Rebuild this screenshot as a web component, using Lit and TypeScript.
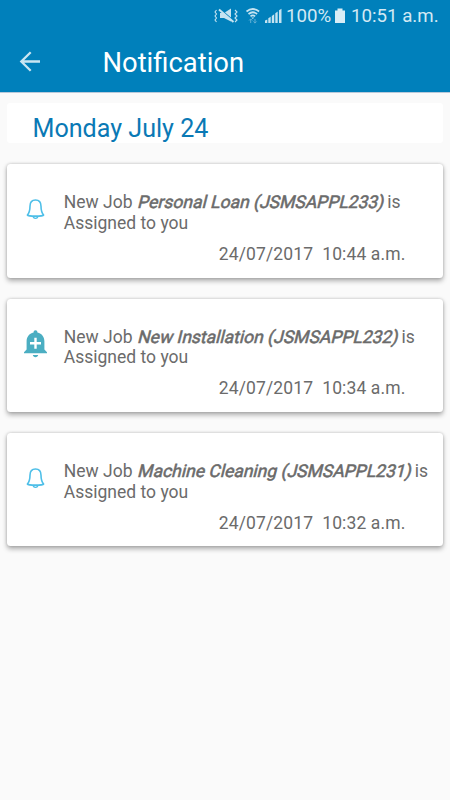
import { LitElement, html, css, svg } from "lit";
import { customElement, property } from "lit/decorators.js";

interface Notice {
  job: string;
  time: string;
  isNew: boolean;
}

const notices: Notice[] = [
  { job: "Personal Loan (JSMSAPPL233)", time: "24/07/2017  10:44 a.m.", isNew: false },
  { job: "New Installation (JSMSAPPL232)", time: "24/07/2017  10:34 a.m.", isNew: true },
  { job: "Machine Cleaning (JSMSAPPL231)", time: "24/07/2017  10:32 a.m.", isNew: false },
];

const outlineBell = svg`
  <path d="M4.400 20C6.500 17.600 7 14.800 7 11.300C7 7.300 9.100 5 12.500 5C15.900 5 18 7.300 18 11.300C18 14.800 18.500 17.600 20.600 20C20.100 20.900 17.500 21.100 12.500 21.100C7.500 21.100 4.900 20.900 4.400 20Z"
    fill="none" stroke="#4ebfe8" stroke-width="1.600" stroke-linejoin="round"/>
  <path d="M10.100 21c.2 3.200 4.600 3.200 4.800 0" fill="none" stroke="#4ebfe8" stroke-width="1.400"/>`;

const addBell = svg`
  <path d="M12.500 0.200c1.200 0 1.900.8 1.900 1.900v.5c4.600 1 7 4.500 7 8.800v8.100l2.600 2.800v1H1v-1l2.600-2.800v-8.100c0-4.300 2.400-7.800 7-8.800v-.5c0-1.100.7-1.900 1.900-1.900zM9.800 25.100h5.400c-.3 1.400-1.300 2.100-2.700 2.100s-2.400-.7-2.700-2.100z" fill="#4baec2"/>
  <path d="M12.500 7.800v11M7 13.300h11" stroke="#fff" stroke-width="2.400"/>`;

@customElement("status-bar")
class StatusBar extends LitElement {
  static styles = css`
    :host {
      display: flex;
      height: 31px;
      color: #d3e9f4;
      font: 18.700px/31px Roboto, sans-serif;
      white-space: nowrap;
    }
    svg { display: block; flex: none; }
    .signals { margin-left: 214px; width: 72px; height: 31px; overflow: visible; }
    .percent { width: 49px; }
    .battery { width: 10px; height: 31px; }
    .clock { margin-left: 6px; }
    .percent, .clock { padding-top: 1px; }
  `;
  render() {
    return html`
      <svg class="signals" viewBox="0 0 72 31" fill="none" stroke="#c5e3f1">
        <path d="M6 13h4l7-4.500v13l-7-3.500H6z" fill="#c5e3f1" stroke="none"/>
        <path d="M6 9l14 12" stroke="#0080bb" stroke-width="1.300"/>
        <path d="M5 9.500l14.500 12.500" stroke-width="2"/>
        <path d="M2.500 10l-1.500 2 1.500 2-1.500 2 1.500 2-1.500 2 1.500 2M21 10l2 2-2 2 2 2-2 2 2 2-2 2" stroke-width="1.100"/>
        <path d="M32.500 11.500q6.300-5 12.600 0M34.500 14q4.300-3.500 8.600 0M36.500 16.300q2.300-1.800 4.600 0" stroke-width="1.700"/>
        <path d="M37.300 17.500h3l-1.500 1.500z" fill="#c5e3f1" stroke="none"/>
        <path d="M36.700 23v-4M35.100 20.500l1.600-1.600 1.600 1.600M41 19v4M39.400 21.500l1.600 1.600 1.600-1.600" stroke="#62b0d6" stroke-width="1"/>
        <path d="M51 23v-2.500l2.300-1v3.500zM54.300 23v-4.800l2.400-1.400V23zM57.800 23v-7l2.400-1.800V23zM61.300 23v-9.800l2.400-1.800V23zM65 23V10.300l2.500-1.600V23z" fill="#c5e3f1" stroke="none"/>
      </svg>
      <span class="percent">100%</span>
      <svg class="battery" viewBox="0 0 10 31"><path d="M2.500 8.500h5v2H10V23H0V10.500h2.500z" fill="#d9edf6"/></svg>
      <span class="clock">10:51 a.m.</span>
    `;
  }
}

@customElement("notice-card")
class NoticeCard extends LitElement {
  @property({ attribute: false }) notice!: Notice;

  static styles = css`
    :host {
      display: flex;
      box-sizing: border-box;
      height: 113.400px;
      border-radius: 3.500px;
      background: #fff;
      box-shadow: 0 2.500px 5px rgba(0, 0, 0, 0.3), 0 0 3px rgba(0, 0, 0, 0.17);
      padding: 28px 0 0 16px;
      color: #6b6b6b;
      font: 17.500px/20.600px Roboto, sans-serif;
    }
    .icon { flex: none; width: 24px; height: 28px; margin-top: 3px; }
    .body { margin-left: 16.800px; width: 372px; }
    .message { white-space: nowrap; }
    .job {
      display: inline-block;
      transform: skewX(-14deg);
      transform-origin: 0 80%;
      -webkit-text-stroke: 0.550px currentColor;
    }
    .time {
      margin-top: 10.500px;
      margin-left: 155px;
      white-space: pre;
      letter-spacing: 0.130px;
    }
  `;
  render() {
    return html`
      <svg class="icon" viewBox="0 0 24 28">${this.notice.isNew ? addBell : outlineBell}</svg>
      <div class="body">
        <div class="message">New Job <span class="job">${this.notice.job}</span> is<br />Assigned to you</div>
        <div class="time">${this.notice.time}</div>
      </div>
    `;
  }
}

@customElement("app-root")
class AppRoot extends LitElement {
  static styles = css`
    :host {
      display: block;
      height: 800px;
      overflow: hidden;
      background: #fafafa;
      font-family: Roboto, sans-serif;
    }
    header { height: 92px; background: #0080bb; border-bottom: 1px solid #b9c9da; box-sizing: content-box; }
    .toolbar { display: flex; align-items: center; height: 61px; color: #fff; }
    .back { width: 22px; height: 22px; margin-left: 19px; }
    h1 { margin: 2px 0 0 61.500px; font-size: 27.400px; font-weight: 400; line-height: 34px; }
    h2 {
      margin: 10px 7px 0;
      padding-left: 25.500px;
      height: 40px;
      border-radius: 3px;
      background: #fff;
      color: #0a79b5;
      font-size: 25.100px;
      font-weight: 400;
      line-height: 51px;
    }
    .list { display: flex; flex-direction: column; gap: 21px; margin: 21.200px 7px 0; }
  `;
  render() {
    return html`
      <header>
        <status-bar></status-bar>
        <div class="toolbar">
          <svg class="back" viewBox="0 0 22 22" fill="none" stroke="#c9e5f2" stroke-width="2.300">
            <path d="M21 10.500H2.500M11.700 1.200L2.300 10.500l9.400 9.300"/>
          </svg>
          <h1>Notification</h1>
        </div>
      </header>
      <h2>Monday July 24</h2>
      <div class="list">${notices.map((n) => html`<notice-card .notice=${n}></notice-card>`)}</div>
    `;
  }
}
